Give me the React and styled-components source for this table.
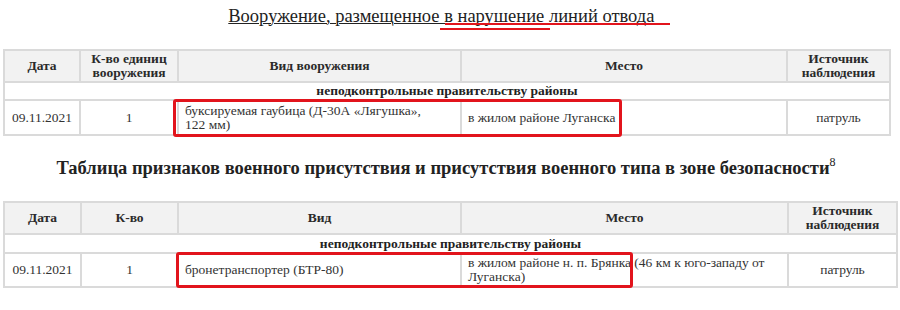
import React from "react";
import styled, { createGlobalStyle } from "styled-components";

const GlobalStyle = createGlobalStyle`
  html, body {
    margin: 0;
    padding: 0;
    background: #ffffff;
  }
  body {
    font-family: "Liberation Serif", "Times New Roman", serif;
    color: #2b2b2b;
  }
`;

const Page = styled.div`
  width: 900px;
  height: 310px;
  overflow: hidden;
  padding: 5px 0 0 3px;
  box-sizing: border-box;
`;

const Title = styled.div`
  position: relative;
  width: 886px;
  text-align: center;
  font-family: "Liberation Serif", "Times New Roman", serif;
  font-size: 18.5px;
  line-height: 22px;
  font-weight: ${(p) => (p.bold ? 700 : 400)};
  color: #222;
  margin: ${(p) => p.margin};
`;

const TitleText = styled.span`
  text-decoration: underline;
  text-decoration-thickness: 1px;
  text-underline-offset: 1px;
`;

const RedLine = styled.span`
  position: absolute;
  height: 2px;
  background: #e2141c;
  left: ${(p) => p.left}px;
  top: ${(p) => p.top}px;
  width: ${(p) => p.width}px;
`;

const Sup = styled.sup`
  font-size: 12px;
  font-weight: 400;
  vertical-align: 8px;
  line-height: 0;
`;

const Block = styled.div`
  position: relative;
  width: ${(p) => p.width}px;
`;

const Table = styled.table`
  width: 100%;
  table-layout: fixed;
  border-collapse: collapse;
  font-family: "Liberation Serif", "Times New Roman", serif;
  font-size: 13.5px;
  line-height: 14px;
  border: 2px solid #dadada;
`;

const Th = styled.th`
  background: #f2f2f2;
  border: 2px solid #dadada;
  font-weight: 700;
  color: #2a2a2a;
  height: 30px;
  padding: 0 4px;
  text-align: center;
`;

const Zone = styled.td`
  border: 2px solid #dadada;
  font-weight: 700;
  text-align: center;
  height: ${(p) => p.h}px;
  padding: 0;
  color: #222;
`;

const Td = styled.td`
  border: 2px solid #dadada;
  height: ${(p) => p.h}px;
  padding: 0 6px;
  text-align: ${(p) => (p.left ? "left" : "center")};
  color: #333;
`;

const Mark = styled.div`
  position: absolute;
  border: 3px solid #e2141c;
  border-radius: 3px;
  left: ${(p) => p.left}px;
  top: ${(p) => p.top}px;
  width: ${(p) => p.width}px;
  height: ${(p) => p.height}px;
  box-sizing: border-box;
`;

const ObsTable = ({ widths, heads, type, place, zoneH, rowH }) => (
  <Table>
    <colgroup>
      {widths.map((w, i) => (
        <col key={i} style={{ width: w }} />
      ))}
    </colgroup>
    <thead>
      <tr>
        {heads.map((h, i) => (
          <Th key={i}>{h}</Th>
        ))}
      </tr>
    </thead>
    <tbody>
      <tr>
        <Zone colSpan={5} h={zoneH}>
          неподконтрольные правительству районы
        </Zone>
      </tr>
      <tr>
        <Td h={rowH}>09.11.2021</Td>
        <Td h={rowH}>1</Td>
        <Td h={rowH} left>{type}</Td>
        <Td h={rowH} left>{place}</Td>
        <Td h={rowH}>патруль</Td>
      </tr>
    </tbody>
  </Table>
);

export default function App() {
  return (
    <Page>
      <GlobalStyle />
      <Title margin="0 0 22px 0">
        <TitleText>
          Вооружение, размещенное в нарушение линий отвода&nbsp;&nbsp;
        </TitleText>
        <RedLine left={442} top={18} width={225} />
        <RedLine left={437} top={23} width={110} />
      </Title>
      <Block width={886}>
        <ObsTable
          widths={[76, 98, 283, 326, 103]}
          zoneH={16}
          rowH={33}
          heads={[
            "Дата",
            <>К-во единиц<br />вооружения</>,
            "Вид вооружения",
            "Место",
            <>Источник<br />наблюдения</>,
          ]}
          type={<>буксируемая гаубица (Д-30А «Лягушка»,<br />122 мм)</>}
          place="в жилом районе Луганска"
        />
        <Mark left={170} top={50} width={449} height={38} />
      </Block>
      <Title bold margin="21px 0 22px 0">
        Таблица признаков военного присутствия и присутствия военного типа в зоне безопасности
        <Sup>8</Sup>
      </Title>
      <Block width={893}>
        <ObsTable
          widths={[77, 97, 283, 327, 109]}
          zoneH={17}
          rowH={32}
          heads={[
            "Дата",
            "К-во",
            "Вид",
            "Место",
            <>Источник<br />наблюдения</>,
          ]}
          type="бронетранспортер (БТР-80)"
          place="в жилом районе н. п. Брянка (46 км к юго-западу от Луганска)"
        />
        <Mark left={173} top={51} width={457} height={36} />
      </Block>
    </Page>
  );
}
